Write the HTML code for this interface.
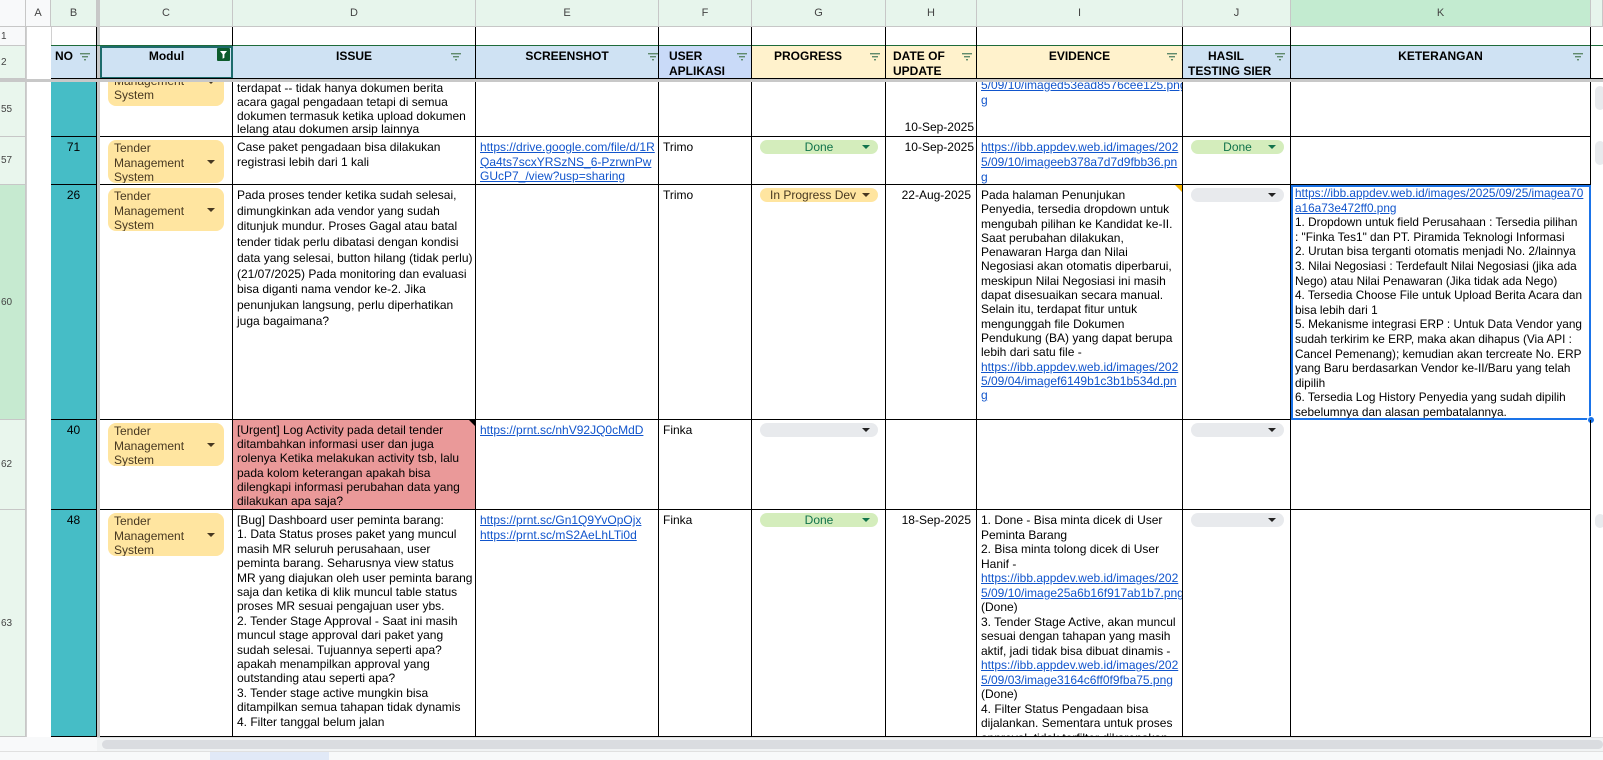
<!DOCTYPE html>
<html><head><meta charset="utf-8">
<style>
*{margin:0;padding:0;box-sizing:border-box}
body{width:1603px;height:760px;overflow:hidden;background:#fff;font-family:"Liberation Sans",Arial,sans-serif;font-size:12px;color:#000;position:relative}
.a{position:absolute}
.c{position:absolute;overflow:hidden;white-space:nowrap;border-right:1px solid #000;border-bottom:1px solid #000;padding:3px 4px 0 4px;line-height:14.5px}
.ch{position:absolute;top:0;height:27px;background:#e7f5ec;border-right:1px solid #c7c7c7;border-bottom:1px solid #c7c7c7;font-size:11px;color:#444;text-align:center;line-height:26px}
.rh{position:absolute;left:0;width:26px;background:#e9f6ed;border-bottom:1px solid #c7c7c7;border-right:1px solid #c7c7c7;font-size:10px;color:#444;padding-left:1px;display:flex;align-items:center}
.h{position:absolute;top:46px;height:33px;border-right:1px solid #000;font-weight:bold;font-size:12px;text-align:center;line-height:15px;padding-top:3px}
.blue{background:#cfe2f3}.yel{background:#fff2cc}.vio{background:#c9daf8}
.f{position:absolute;top:7px}
a,.l{color:#1155cc;text-decoration:underline}
.pill{position:absolute;background:#ffe5a0;border-radius:8px;color:#473821;line-height:14.5px;padding:1px 0 0 6px;white-space:nowrap;overflow:hidden}
.pill i{position:absolute;right:9px;top:50%;margin-top:-2px;border-left:4px solid transparent;border-right:4px solid transparent;border-top:4px solid #473821}
.pp{position:absolute;height:14px;border-radius:7px;text-align:center;line-height:14px;font-size:12px}
.pp i{position:absolute;right:8px;top:5px;border-left:4px solid transparent;border-right:4px solid transparent;border-top:4px solid #222}
.done{background:#d4edbc;color:#11734b}.done i{border-top-color:#11734b}
.gray{background:#e8eaed}
.teal{background:#46bdc6}
</style></head><body>

<div class="ch" style="left:0;width:26px;background:#f8f9fa"></div>
<div class="ch" style="left:26px;width:25px;background:#f8f9fa">A</div>
<div class="ch" style="left:51px;width:46px">B</div>
<div class="a" style="left:97px;top:0;width:3px;height:737px;background:#c8c8c8"></div>
<div class="ch" style="left:100px;width:133px">C</div>
<div class="ch" style="left:233px;width:243px">D</div>
<div class="ch" style="left:476px;width:183px">E</div>
<div class="ch" style="left:659px;width:93px">F</div>
<div class="ch" style="left:752px;width:134px">G</div>
<div class="ch" style="left:886px;width:91px">H</div>
<div class="ch" style="left:977px;width:206px">I</div>
<div class="ch" style="left:1183px;width:108px">J</div>
<div class="ch" style="left:1291px;width:300px;background:#c3ebd0">K</div>
<div class="ch" style="left:1591px;width:12px"></div>

<div class="rh" style="top:27px;height:19px;background:#f8f9fa">1</div>
<div class="rh" style="top:46px;height:33px">2</div>
<div class="rh" style="top:82px;height:55px">55</div>
<div class="rh" style="top:137px;height:48px">57</div>
<div class="rh" style="top:185px;height:235px;background:#c6ead0">60</div>
<div class="rh" style="top:420px;height:90px">62</div>
<div class="rh" style="top:510px;height:227px">63</div>
<div class="a" style="left:26px;top:27px;width:1px;height:710px;background:#d0d0d0"></div>
<div class="a" style="left:51px;top:27px;width:1px;height:52px;background:#d0d0d0"></div>

<div class="a" style="left:51px;top:45px;width:1552px;height:1px;background:#1e6b3a"></div>
<div class="a" style="left:96px;top:27px;width:1px;height:19px;background:#000"></div>
<div class="a" style="left:232px;top:27px;width:1px;height:19px;background:#000"></div>
<div class="a" style="left:475px;top:27px;width:1px;height:19px;background:#000"></div>
<div class="a" style="left:658px;top:27px;width:1px;height:19px;background:#000"></div>
<div class="a" style="left:751px;top:27px;width:1px;height:19px;background:#000"></div>
<div class="a" style="left:885px;top:27px;width:1px;height:19px;background:#000"></div>
<div class="a" style="left:976px;top:27px;width:1px;height:19px;background:#000"></div>
<div class="a" style="left:1182px;top:27px;width:1px;height:19px;background:#000"></div>
<div class="a" style="left:1290px;top:27px;width:1px;height:19px;background:#000"></div>
<div class="a" style="left:1590px;top:27px;width:1px;height:19px;background:#000"></div>

<svg width="0" height="0" style="position:absolute"><defs><g id="fi"><rect x="0" y="0" width="10" height="1.4" fill="#5f8a6c"/><rect x="2" y="3" width="6" height="1.4" fill="#5f8a6c"/><rect x="4" y="6" width="2" height="1.4" fill="#5f8a6c"/></g></defs></svg>
<div class="h blue" style="left:51px;width:46px;text-align:left;padding-left:4px">NO<svg class="f" style="left:29px" width="10" height="8"><use href="#fi"/></svg></div>
<div class="h blue" style="left:100px;width:133px;border:2px solid #1d6b6b;padding-top:1px">Modul<div class="a" style="left:115px;top:0px;width:13px;height:13px;background:#0d5c2c;border-radius:1px"><svg width="13" height="13"><path d="M3 3h7l-2.6 3.2v3.6l-1.8 1v-4.6z" fill="#fff"/></svg></div></div>
<div class="h blue" style="left:233px;width:243px">ISSUE<svg class="f" style="left:218px" width="10" height="8"><use href="#fi"/></svg></div>
<div class="h blue" style="left:476px;width:183px">SCREENSHOT<svg class="f" style="left:172px" width="10" height="8"><use href="#fi"/></svg></div>
<div class="h vio" style="left:659px;width:93px;text-align:left;padding-left:10px">USER<br>APLIKASI<svg class="f" style="left:78px" width="10" height="8"><use href="#fi"/></svg></div>
<div class="h yel" style="left:752px;width:134px;text-align:left;padding-left:22px">PROGRESS<svg class="f" style="left:118px" width="10" height="8"><use href="#fi"/></svg></div>
<div class="h yel" style="left:886px;width:91px;text-align:left;padding-left:7px">DATE OF<br>UPDATE<svg class="f" style="left:76px" width="10" height="8"><use href="#fi"/></svg></div>
<div class="h yel" style="left:977px;width:206px">EVIDENCE<svg class="f" style="left:190px" width="10" height="8"><use href="#fi"/></svg></div>
<div class="h blue" style="left:1183px;width:108px;text-align:left;padding-left:5px">&nbsp; &nbsp; &nbsp; HASIL<br>TESTING SIER<svg class="f" style="left:92px" width="10" height="8"><use href="#fi"/></svg></div>
<div class="h blue" style="left:1291px;width:300px">KETERANGAN<svg class="f" style="left:282px" width="10" height="8"><use href="#fi"/></svg></div>
<div class="a" style="left:51px;top:78px;width:1552px;height:1px;background:#000"></div>
<div class="a" style="left:0;top:79px;width:1603px;height:3px;background:#c8c8c8"></div>

<!-- row 55 -->
<div class="c teal" style="left:51px;top:82px;width:46px;height:55px;border-right:1px solid #000"></div>
<div class="c" style="left:100px;top:82px;width:133px;height:55px"><div class="pill" style="left:8px;top:-24px;width:116px;height:48px">Tender<br>Management<br>System<i></i></div></div>
<div class="c" style="left:233px;top:82px;width:243px;height:55px;line-height:13.8px;padding-top:0"><div style="margin-top:0px">terdapat -- tidak hanya dokumen berita<br>acara gagal pengadaan tetapi di semua<br>dokumen termasuk ketika upload dokumen<br>lelang atau dokumen arsip lainnya</div></div>
<div class="c" style="left:476px;top:82px;width:183px;height:55px"></div>
<div class="c" style="left:659px;top:82px;width:93px;height:55px"></div>
<div class="c" style="left:752px;top:82px;width:134px;height:55px"></div>
<div class="c" style="left:886px;top:82px;width:91px;height:55px;text-align:right;padding-top:38px;padding-right:2px">10-Sep-2025</div>
<div class="c" style="left:977px;top:82px;width:206px;height:55px;padding-top:0"><div class="l" style="margin-top:-4px">5/09/10/imaged53ead8576cee125.png<br>g</div></div>
<div class="c" style="left:1183px;top:82px;width:108px;height:55px"></div>
<div class="c" style="left:1291px;top:82px;width:300px;height:55px"></div>

<!-- row 57 -->
<div class="c teal" style="left:51px;top:137px;width:46px;height:48px;text-align:center">71</div>
<div class="c" style="left:100px;top:137px;width:133px;height:48px"><div class="pill" style="left:8px;top:3px;width:116px;height:43px">Tender<br>Management<br>System<i></i></div></div>
<div class="c" style="left:233px;top:137px;width:243px;height:48px">Case paket pengadaan bisa dilakukan<br>registrasi lebih dari 1 kali</div>
<div class="c l" style="left:476px;top:137px;width:183px;height:48px">https://drive.google.com/file/d/1R<br>Qa4ts7scxYRSzNS_6-PzrwnPw<br>GUcP7_/view?usp=sharing</div>
<div class="c" style="left:659px;top:137px;width:93px;height:48px">Trimo</div>
<div class="c" style="left:752px;top:137px;width:134px;height:48px"><div class="pp done" style="left:8px;top:3px;width:118px">Done<i></i></div></div>
<div class="c" style="left:886px;top:137px;width:91px;height:48px;text-align:right;padding-right:2px">10-Sep-2025</div>
<div class="c l" style="left:977px;top:137px;width:206px;height:48px;line-height:14.8px">https://ibb.appdev.web.id/images/202<br>5/09/10/imageeb378a7d7d9fbb36.pn<br>g</div>
<div class="c" style="left:1183px;top:137px;width:108px;height:48px"><div class="pp done" style="left:8px;top:3px;width:93px">Done<i></i></div></div>
<div class="c" style="left:1291px;top:137px;width:300px;height:48px"></div>

<!-- row 60 -->
<div class="c teal" style="left:51px;top:185px;width:46px;height:235px;text-align:center">26</div>
<div class="c" style="left:100px;top:185px;width:133px;height:235px"><div class="pill" style="left:8px;top:3px;width:116px;height:43px">Tender<br>Management<br>System<i></i></div></div>
<div class="c" style="left:233px;top:185px;width:243px;height:235px;line-height:15.7px;padding-top:3px">Pada proses tender ketika sudah selesai,<br>dimungkinkan ada vendor yang sudah<br>ditunjuk mundur. Proses Gagal atau batal<br>tender tidak perlu dibatasi dengan kondisi<br>data yang selesai, button hilang (tidak perlu)<br>(21/07/2025) Pada monitoring dan evaluasi<br>bisa diganti nama vendor ke-2. Jika<br>penunjukan langsung, perlu diperhatikan<br>juga bagaimana?</div>
<div class="c" style="left:476px;top:185px;width:183px;height:235px"></div>
<div class="c" style="left:659px;top:185px;width:93px;height:235px">Trimo</div>
<div class="c" style="left:752px;top:185px;width:134px;height:235px"><div class="pp" style="left:8px;top:3px;width:118px;background:#ffe5a0;color:#473821;text-align:left;padding-left:10px">In Progress Dev<i style="border-top-color:#473821"></i></div></div>
<div class="c" style="left:886px;top:185px;width:91px;height:235px;text-align:right;padding-right:5px">22-Aug-2025</div>
<div class="c" style="left:977px;top:185px;width:206px;height:235px;line-height:14.3px">Pada halaman Penunjukan<br>Penyedia, tersedia dropdown untuk<br>mengubah pilihan ke Kandidat ke-II.<br>Saat perubahan dilakukan,<br>Penawaran Harga dan Nilai<br>Negosiasi akan otomatis diperbarui,<br>meskipun Nilai Negosiasi ini masih<br>dapat disesuaikan secara manual.<br>Selain itu, terdapat fitur untuk<br>mengunggah file Dokumen<br>Pendukung (BA) yang dapat berupa<br>lebih dari satu file -<br><span class="l">https://ibb.appdev.web.id/images/202<br>5/09/04/imagef6149b1c3b1b534d.pn<br>g</span></div>
<div class="a" style="left:1175px;top:185px;width:0;height:0;border-left:7px solid transparent;border-top:7px solid #f6b400"></div>
<div class="c" style="left:1183px;top:185px;width:108px;height:235px"><div class="pp gray" style="left:8px;top:3px;width:93px"><i></i></div></div>
<div class="c" style="left:1291px;top:185px;width:300px;height:235px;line-height:14.6px;font-size:11.8px;padding-top:1px"><span class="l">https://ibb.appdev.web.id/images/2025/09/25/imagea70<br>a16a73e472ff0.png</span><br>1. Dropdown untuk field Perusahaan : Tersedia pilihan<br>: "Finka Tes1" dan PT. Piramida Teknologi Informasi<br>2. Urutan bisa terganti otomatis menjadi No. 2/lainnya<br>3. Nilai Negosiasi : Terdefault Nilai Negosiasi (jika ada<br>Nego) atau Nilai Penawaran (Jika tidak ada Nego)<br>4. Tersedia Choose File untuk Upload Berita Acara dan<br>bisa lebih dari 1<br>5. Mekanisme integrasi ERP : Untuk Data Vendor yang<br>sudah terkirim ke ERP, maka akan dihapus (Via API :<br>Cancel Pemenang); kemudian akan tercreate No. ERP<br>yang Baru berdasarkan Vendor ke-II/Baru yang telah<br>dipilih<br>6. Tersedia Log History Penyedia yang sudah dipilih<br>sebelumnya dan alasan pembatalannya.</div>
<div class="a" style="left:1291px;top:185px;width:300px;height:235px;border:2px solid #1a73e8"></div>
<div class="a" style="left:1587px;top:416px;width:8px;height:8px;border-radius:50%;background:#1a73e8;border:1px solid #fff"></div>

<!-- row 62 -->
<div class="c teal" style="left:51px;top:420px;width:46px;height:90px;text-align:center">40</div>
<div class="c" style="left:100px;top:420px;width:133px;height:90px"><div class="pill" style="left:8px;top:3px;width:116px;height:43px">Tender<br>Management<br>System<i></i></div></div>
<div class="c" style="left:233px;top:420px;width:243px;height:90px;background:#ea9999;line-height:14.2px">[Urgent] Log Activity pada detail tender<br>ditambahkan informasi user dan juga<br>rolenya Ketika melakukan activity tsb, lalu<br>pada kolom keterangan apakah bisa<br>dilengkapi informasi perubahan data yang<br>dilakukan apa saja?</div>
<div class="a" style="left:469px;top:420px;width:0;height:0;border-left:6px solid transparent;border-top:6px solid #000"></div>
<div class="c l" style="left:476px;top:420px;width:183px;height:90px">https://prnt.sc/nhV92JQ0cMdD</div>
<div class="c" style="left:659px;top:420px;width:93px;height:90px">Finka</div>
<div class="c" style="left:752px;top:420px;width:134px;height:90px"><div class="pp gray" style="left:8px;top:3px;width:118px"><i></i></div></div>
<div class="c" style="left:886px;top:420px;width:91px;height:90px"></div>
<div class="c" style="left:977px;top:420px;width:206px;height:90px"></div>
<div class="c" style="left:1183px;top:420px;width:108px;height:90px"><div class="pp gray" style="left:8px;top:3px;width:93px"><i></i></div></div>
<div class="c" style="left:1291px;top:420px;width:300px;height:90px"></div>

<!-- row 63 -->
<div class="c teal" style="left:51px;top:510px;width:46px;height:227px;text-align:center">48</div>
<div class="c" style="left:100px;top:510px;width:133px;height:227px"><div class="pill" style="left:8px;top:3px;width:116px;height:43px">Tender<br>Management<br>System<i></i></div></div>
<div class="c" style="left:233px;top:510px;width:243px;height:227px;line-height:14.4px">[Bug] Dashboard user peminta barang:<br>1. Data Status proses paket yang muncul<br>masih MR seluruh perusahaan, user<br>peminta barang. Seharusnya view status<br>MR yang diajukan oleh user peminta barang<br>saja dan ketika di klik muncul table status<br>proses MR sesuai pengajuan user ybs.<br>2. Tender Stage Approval - Saat ini masih<br>muncul stage approval dari paket yang<br>sudah selesai. Tujuannya seperti apa?<br>apakah menampilkan approval yang<br>outstanding atau seperti apa?<br>3. Tender stage active mungkin bisa<br>ditampilkan semua tahapan tidak dynamis<br>4. Filter tanggal belum jalan</div>
<div class="c l" style="left:476px;top:510px;width:183px;height:227px">https://prnt.sc/Gn1Q9YvOpOjx<br>https://prnt.sc/mS2AeLhLTi0d</div>
<div class="c" style="left:659px;top:510px;width:93px;height:227px">Finka</div>
<div class="c" style="left:752px;top:510px;width:134px;height:227px"><div class="pp done" style="left:8px;top:3px;width:118px">Done<i></i></div></div>
<div class="c" style="left:886px;top:510px;width:91px;height:227px;text-align:right;padding-right:5px">18-Sep-2025</div>
<div class="c" style="left:977px;top:510px;width:206px;height:227px;line-height:14.5px">1. Done - Bisa minta dicek di User<br>Peminta Barang<br>2. Bisa minta tolong dicek di User<br>Hanif -<br><span class="l">https://ibb.appdev.web.id/images/202<br>5/09/10/image25a6b16f917ab1b7.png</span><br>(Done)<br>3. Tender Stage Active, akan muncul<br>sesuai dengan tahapan yang masih<br>aktif, jadi tidak bisa dibuat dinamis -<br><span class="l">https://ibb.appdev.web.id/images/202<br>5/09/03/image3164c6ff0f9fba75.png</span><br>(Done)<br>4. Filter Status Pengadaan bisa<br>dijalankan. Sementara untuk proses<br>approval, tidak terfilter dikarenakan</div>
<div class="c" style="left:1183px;top:510px;width:108px;height:227px"><div class="pp gray" style="left:8px;top:3px;width:93px"><i></i></div></div>
<div class="c" style="left:1291px;top:510px;width:300px;height:227px"></div>

<div class="a" style="left:1595px;top:86px;width:10px;height:24px;background:#e8eaed;border-radius:6px"></div>
<div class="a" style="left:1595px;top:141px;width:10px;height:24px;background:#e8eaed;border-radius:6px"></div>
<div class="a" style="left:1595px;top:514px;width:10px;height:14px;background:#e8eaed;border-radius:6px"></div>

<div class="a" style="left:0;top:737px;width:1603px;height:14px;background:#f1f3f4;border-top:1px solid #e0e0e0"></div>
<div class="a" style="left:0;top:737px;width:97px;height:14px;background:#f8f9fa"></div>
<div class="a" style="left:102px;top:740px;width:1501px;height:9px;background:#dadce0;border-radius:5px"></div>
<div class="a" style="left:0;top:751px;width:1603px;height:9px;background:#f8f9fa;border-top:1px solid #e0e0e0"></div>
<div class="a" style="left:210px;top:752px;width:119px;height:8px;background:#e1e9f7"></div>
</body></html>
